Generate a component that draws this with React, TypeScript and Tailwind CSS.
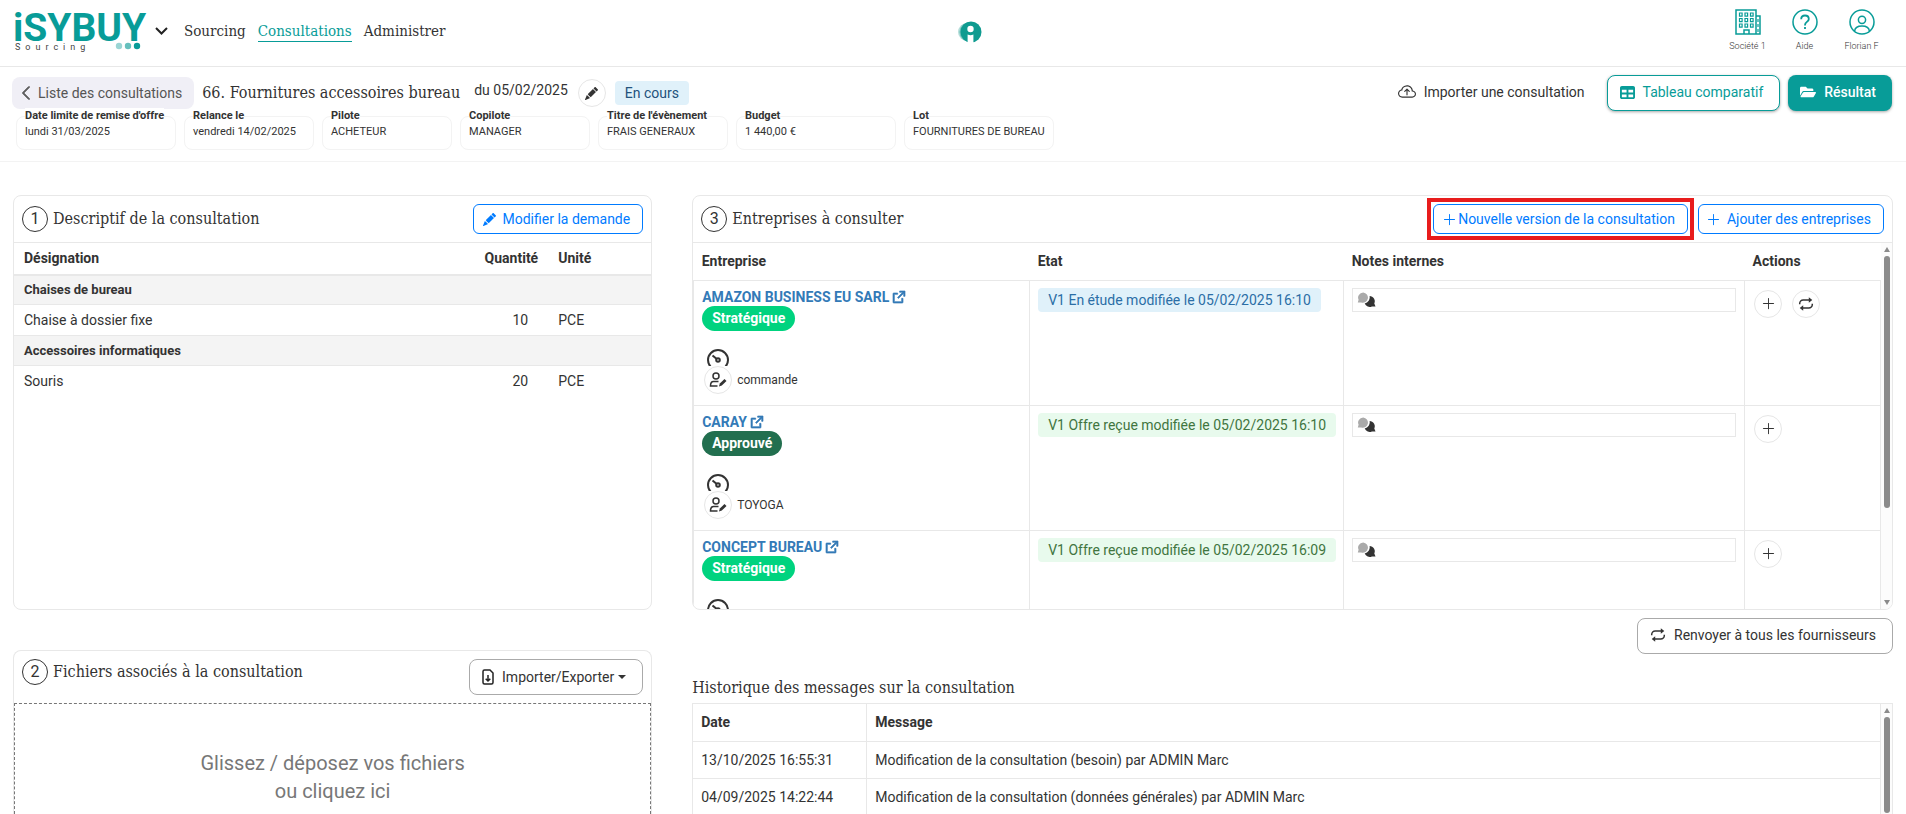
import type { ReactNode } from "react";
import { BsChevronLeft, BsCloudArrowUp, BsPencilFill, BsPlusLg } from "react-icons/bs";
import { FaFolderOpen } from "react-icons/fa";
import { FaTable } from "react-icons/fa6";
import { RiExternalLinkLine } from "react-icons/ri";
import clsx from "clsx";

interface Meta {
  label: string;
  value: string;
  className: string;
}

interface Company {
  name: string;
  tag: string;
  tagClass: string;
  contact?: string;
  state: string;
  stateClass: string;
  resend?: boolean;
}

const metas: Meta[] = [
  { label: "Date limite de remise d'offre", value: "lundi 31/03/2025", className: "min-w-[160px]" },
  { label: "Relance le", value: "vendredi 14/02/2025", className: "min-w-[130px]" },
  { label: "Pilote", value: "ACHETEUR", className: "min-w-[130px]" },
  { label: "Copilote", value: "MANAGER", className: "min-w-[130px]" },
  { label: "Titre de l'évènement", value: "FRAIS GENERAUX", className: "min-w-[130px]" },
  { label: "Budget", value: "1 440,00 €", className: "min-w-[160px]" },
  { label: "Lot", value: "FOURNITURES DE BUREAU", className: "min-w-[130px]" },
];

const groups = [
  { name: "Chaises de bureau", items: [{ name: "Chaise à dossier fixe", qty: 10, unit: "PCE" }] },
  { name: "Accessoires informatiques", items: [{ name: "Souris", qty: 20, unit: "PCE" }] },
];

const companies: Company[] = [
  {
    name: "AMAZON BUSINESS EU SARL",
    tag: "Stratégique",
    tagClass: "bg-[#00d37f]",
    contact: "commande",
    state: "V1 En étude modifiée le 05/02/2025 16:10",
    stateClass: "bg-[#e0f1fa] text-[#2b6ea6]",
    resend: true,
  },
  {
    name: "CARAY",
    tag: "Approuvé",
    tagClass: "bg-[#226f4f]",
    contact: "TOYOGA",
    state: "V1 Offre reçue modifiée le 05/02/2025 16:10",
    stateClass: "bg-[#e8faed] text-[#41753f]",
  },
  {
    name: "CONCEPT BUREAU",
    tag: "Stratégique",
    tagClass: "bg-[#00d37f]",
    state: "V1 Offre reçue modifiée le 05/02/2025 16:09",
    stateClass: "bg-[#e8faed] text-[#41753f]",
  },
];

const messages = [
  { date: "13/10/2025 16:55:31", text: "Modification de la consultation (besoin) par ADMIN Marc" },
  { date: "04/09/2025 14:22:44", text: "Modification de la consultation (données générales) par ADMIN Marc" },
];

const slab = "font-['Roboto_Slab','DejaVu_Serif_Condensed','DejaVu_Serif',serif]";

function Logo() {
  return (
    <svg width="136" height="44" viewBox="0 0 136 44" className="overflow-visible" role="img" aria-label="iSYBUY Sourcing">
      <text x="-1" y="32" fontFamily="Roboto" fontWeight="700" fontSize="39" fill="#089c98">
        iSYBUY
      </text>
      <text x="1" y="41" fontFamily="Roboto" fontSize="9" letterSpacing="5" fill="#444">
        Sourcing
      </text>
      <circle cx="105" cy="37" r="3.2" fill="#9bd5d4" />
      <circle cx="114" cy="37" r="3.2" fill="#66c0bd" />
      <circle cx="123" cy="37" r="3.2" fill="#089c98" />
    </svg>
  );
}

function BrandMark() {
  return (
    <svg width="26" height="22" viewBox="0 0 26 22" aria-hidden="true">
      <circle cx="11" cy="11" r="9" fill="#b5deda" />
      <circle cx="13" cy="11" r="9.6" fill="#6fbfb8" />
      <circle cx="15" cy="11" r="10.5" fill="#0f9b90" />
      <circle cx="14.5" cy="8" r="3.2" fill="#fff" />
      <path d="M11.6 13.4q3 1.600 5.800 0V22h-5.800z" fill="#fff" />
    </svg>
  );
}

function HelpIcon() {
  return (
    <svg width="26" height="26" viewBox="0 0 26 26" fill="none" stroke="currentColor" strokeWidth="1.5" aria-hidden="true">
      <circle cx="13" cy="13" r="12" />
      <path d="M9.200 10.200c0-2.300 1.600-3.700 3.800-3.700s3.800 1.400 3.800 3.400c0 3-3.800 3-3.800 6v.6M13 18v2" strokeWidth="1.8" />
    </svg>
  );
}

function UserIcon() {
  return (
    <svg width="26" height="26" viewBox="0 0 26 26" fill="none" stroke="currentColor" strokeWidth="1.5" aria-hidden="true">
      <circle cx="13" cy="13" r="12" />
      <circle cx="13" cy="10.8" r="3.6" />
      <path d="M5.600 22.200c.3-3.600 2.600-5.200 7.400-5.200s7.100 1.600 7.400 5.200" />
    </svg>
  );
}

function CompanyIcon() {
  return (
    <svg width="26" height="26" viewBox="0 0 26 26" fill="none" stroke="currentColor" strokeWidth="1.2" aria-hidden="true">
      <path d="M1 1h20v24H1zM21 7h4v18h-4M9 25v-4h5v4" strokeWidth="1.500" />
      {[4, 9.5, 15].map((y) => (
        <path key={y} d={`M4.500 ${y}h2.600v3.200H4.500zM10 ${y}h2.600v3.200H10zM15.500 ${y}h2.600v3.200h-2.600z`} />
      ))}
      <path d="M23 10v3M23 15v3M23 20v3" />
    </svg>
  );
}

function ChatIcon() {
  return (
    <svg width="19" height="15" viewBox="0 0 19 15" aria-hidden="true">
      <path d="M12.600 4A5.200 5.200 0 0 1 17.300 11.400l1.200 3h-3.600A5.400 5.400 0 0 1 7.700 11.600a6.500 6.500 0 0 0 4.900-7.600z" fill="#333" />
      <path d="M6.200.4a5.300 5.200 0 1 1-1.900 10.200H.8l.8-2.800A5.300 5.200 0 0 1 6.200.4z" fill="#aaa" />
    </svg>
  );
}

function GaugeIcon() {
  return (
    <svg width="24" height="24" viewBox="0 0 24 24" fill="none" stroke="#333" strokeWidth="2" aria-hidden="true">
      <circle cx="12" cy="12" r="10" />
      <circle cx="12" cy="12" r="1.8" />
      <path d="m6.500 7.500 4 3.300" />
    </svg>
  );
}

function RepeatIcon() {
  return (
    <svg width="16" height="16" viewBox="0 0 16 16" fill="none" stroke="#333" strokeWidth="1.500" aria-hidden="true">
      <path d="M1.700 8.300V7.500A3.500 3.500 0 0 1 5.200 4H12M14.300 7.700v.8a3.500 3.500 0 0 1-3.500 3.500H4" />
      <path d="M10.800 1.300 14.300 4l-3.500 2.700zM5.200 9.300 1.700 12l3.500 2.700z" fill="#333" stroke="none" />
    </svg>
  );
}

function ContactIcon() {
  return (
    <svg width="18" height="18" viewBox="0 0 18 18" fill="none" stroke="#333" strokeWidth="1.500" aria-hidden="true">
      <circle cx="7" cy="5" r="3" />
      <path d="M9.500 10.500H4.500q-3 0-3 4.500h7" />
      <path d="M10 15.500l.8-3 4.700-4.500 2 2-4.700 4.600z" fill="#333" stroke="none" />
    </svg>
  );
}

function FileIcon() {
  return (
    <svg width="12" height="16" viewBox="0 0 12 16" fill="none" stroke="#222" strokeWidth="1.500" aria-hidden="true">
      <path d="M1 2.500Q1 1 2.500 1H8l3 3v9.500q0 1.500-1.500 1.500h-7Q1 15 1 13.500zM6 6v6M3.700 9.700 6 12l2.300-2.300" />
    </svg>
  );
}

// Track with its two arrows, the thumb height is set by the caller
function Scrollbar({ thumb }: { thumb: string }) {
  return (
    <div className="flex w-[11px] shrink-0 flex-col items-center bg-[#fcfcfc] py-1">
      <div className="mb-1 h-0 w-0 border-x-[3px] border-b-[5px] border-x-transparent border-b-[#8b8b8b]" />
      <div className={clsx("w-[6px] rounded-full bg-[#8b8b8b]", thumb)} />
      <div className="mt-auto h-0 w-0 border-x-[3px] border-t-[5px] border-x-transparent border-t-[#8b8b8b]" />
    </div>
  );
}

function SectionTitle({ step, children }: { step: number; children: ReactNode }) {
  return (
    <h2 className={`flex items-center gap-[5px] text-[16px] font-medium ${slab}`}>
      <span className="flex size-[26px] items-center justify-center rounded-full border border-[#333] font-['Roboto',sans-serif] text-[16px] font-normal">
        {step}
      </span>
      {children}
    </h2>
  );
}

function BlueButton({ icon, children }: { icon: ReactNode; children: ReactNode }) {
  return (
    <button className="flex h-[30px] items-center gap-[7px] rounded-md border border-[#007bff] bg-white pr-3 pl-[9px] text-[#007bff]">
      {icon}
      {children}
    </button>
  );
}

function RoundButton({ label, children }: { label: string; children: ReactNode }) {
  return (
    <button aria-label={label} className="flex size-7 shrink-0 items-center justify-center rounded-full border border-[#e6e6e6] bg-white">
      {children}
    </button>
  );
}

function Header() {
  return (
    <header className="flex h-[67px] shrink-0 items-start justify-between border-b border-[#e8e8e8]">
      <div className="flex flex-1 items-center pt-[9px] pl-[14px]">
        <Logo />
        <button aria-label="Changer de module" className="ml-[5px]">
          <svg width="13" height="8" viewBox="0 0 13 8" fill="none" stroke="#222" strokeWidth="2" aria-hidden="true">
            <path d="m1 1 5.500 5.500L12 1" />
          </svg>
        </button>
        <nav className={`ml-4 flex gap-3 text-[15px] ${slab}`}>
          <a href="#sourcing">Sourcing</a>
          <a href="#consultations" className="border-b border-[#089c98] text-[#089c98]">Consultations</a>
          <a href="#administrer">Administrer</a>
        </nav>
      </div>
      <div className="pt-[21px] pl-[34px]">
        <BrandMark />
      </div>
      <div className="flex flex-1 justify-end pt-[9px] pr-4 text-[9px] leading-[14px] font-light">
        <a href="#societe" className="flex w-[57px] flex-col items-center gap-1">
          <span className="text-[#089c98]"><CompanyIcon /></span>
          Société 1
        </a>
        <a href="#aide" className="flex w-[57px] flex-col items-center gap-1">
          <span className="text-[#089c98]"><HelpIcon /></span>
          Aide
        </a>
        <a href="#profil" className="flex w-[57px] flex-col items-center gap-1">
          <span className="text-[#089c98]"><UserIcon /></span>
          Florian F
        </a>
      </div>
    </header>
  );
}

function SubHeader() {
  return (
    <section className="h-[95px] shrink-0 border-b border-[#f3f3f3] pt-2 pr-[14px] pl-3">
      <div className="flex items-start">
        <a href="#liste" className="mt-[2px] flex h-8 items-center gap-1 rounded-lg bg-[#f0eff6] pr-3 pl-[6px] text-[#555]">
          <BsChevronLeft className="size-4 stroke-1" />
          Liste des consultations
        </a>
        <h1 className={`ml-2 pt-[7px] text-[16px] leading-[22px] font-medium ${slab}`}>66. Fournitures accessoires bureau</h1>
        <span className="ml-[14px] pt-[5px]">du 05/02/2025</span>
        <div className="mt-1 ml-[10px] flex items-center gap-[9px]">
          <RoundButton label="Modifier le titre">
            <BsPencilFill className="size-[13px]" />
          </RoundButton>
          <span className="flex h-6 items-center rounded bg-[#e0f1fa] px-[10px] text-[#23527c]">En cours</span>
        </div>
        <div className="ml-auto flex gap-2">
          <button className="mr-[14px] flex h-[34px] items-center gap-2">
            <BsCloudArrowUp className="size-[18px]" />
            Importer une consultation
          </button>
          <button className="flex h-9 items-center gap-2 rounded-lg border border-[#089c98] bg-white pr-4 pb-[2px] pl-3 text-[#089c98] shadow-[0_1px_3px_rgba(0,0,0,0.35)]">
            <FaTable className="size-[15px]" />
            Tableau comparatif
          </button>
          <button className="flex h-9 items-center gap-2 rounded-lg bg-[#089c98] pr-4 pb-[2px] pl-3 font-medium text-white shadow-[0_1px_3px_rgba(0,0,0,0.35)]">
            <FaFolderOpen className="size-4" />
            Résultat
          </button>
        </div>
      </div>
      <dl className="ml-1 flex gap-2 text-[11px] leading-4">
        {metas.map((meta) => (
          <div key={meta.label} className={clsx("mt-[5px] h-[34px] rounded-lg border border-[#f3f3f3] px-2", meta.className)}>
            <dt className="-mt-[9px] w-fit bg-white font-bold">{meta.label}</dt>
            <dd>{meta.value}</dd>
          </div>
        ))}
      </dl>
    </section>
  );
}

function Description() {
  return (
    <section className="h-[415px] rounded-lg border border-[#e8e8e8]">
      <div className="flex h-[46px] items-center justify-between px-2">
        <SectionTitle step={1}>Descriptif de la consultation</SectionTitle>
        <BlueButton icon={<BsPencilFill className="size-[13px]" />}>Modifier la demande</BlueButton>
      </div>
      <table className="w-full border-t border-[#e8e8e8] text-left">
        <thead>
          <tr className="h-[32px] border-b-2 border-[#e8e8e8]">
            <th className="pl-[10px] font-bold">Désignation</th>
            <th className="w-[76px] pr-2 text-right font-bold">Quantité</th>
            <th className="w-[105px] pl-3 font-bold">Unité</th>
          </tr>
        </thead>
        {groups.map((group) => (
          <tbody key={group.name}>
            <tr className="h-[30px] border-t border-[#e8e8e8] bg-[#f4f4f4] text-[13px]">
              <th colSpan={3} className="pl-[10px] font-bold">{group.name}</th>
            </tr>
            {group.items.map((item) => (
              <tr key={item.name} className="h-[31px] border-t border-[#e8e8e8]">
                <td className="pl-[10px]">{item.name}</td>
                <td className="pr-[18px] text-right">{item.qty}</td>
                <td className="pl-3">{item.unit}</td>
              </tr>
            ))}
          </tbody>
        ))}
      </table>
    </section>
  );
}

function Files() {
  return (
    <section className="mt-10 flex flex-1 flex-col rounded-t-lg border border-b-0 border-[#e8e8e8]">
      <div className="flex h-[52px] shrink-0 items-start justify-between px-2 pt-2">
        <SectionTitle step={2}>Fichiers associés à la consultation</SectionTitle>
        <button className="flex h-9 items-center gap-2 rounded-lg border border-[#aaa] bg-white pr-4 pl-3">
          <FileIcon />
          <span className="flex items-center gap-1">
            Importer/Exporter
            <span className="h-0 w-0 border-x-4 border-t-4 border-x-transparent border-t-[#333]" />
          </span>
        </button>
      </div>
      <button className="flex flex-1 flex-col items-center border border-b-0 border-dashed border-[#777] pt-[45px] text-[20px] leading-7 text-[#777]">
        <span>Glissez / déposez vos fichiers</span>
        <span>ou cliquez ici</span>
      </button>
    </section>
  );
}

function Companies() {
  return (
    <section className="flex h-[415px] shrink-0 flex-col overflow-hidden rounded-lg border border-[#e8e8e8]">
      <div className="flex h-[47px] shrink-0 items-center justify-between border-b border-[#e8e8e8] px-2">
        <SectionTitle step={3}>Entreprises à consulter</SectionTitle>
        <div className="flex items-center gap-1">
          <div className="border-4 border-[#e81c1c] p-[2px]">
            <BlueButton icon={<BsPlusLg className="-mr-[6px] -ml-px size-[15px]" />}>Nouvelle version de la consultation</BlueButton>
          </div>
          <BlueButton icon={<BsPlusLg className="-mr-px -ml-[2px] size-[15px]" />}>Ajouter des entreprises</BlueButton>
        </div>
      </div>
      <div className="flex min-h-0 flex-1">
        <div className="min-w-0 flex-1 overflow-hidden">
          <table className="w-full table-fixed text-left">
            <thead>
              <tr className="h-[37px]">
                <th className="w-[336px] pl-2 font-bold">Entreprise</th>
                <th className="w-[314px] pl-2 font-bold">Etat</th>
                <th className="pl-2 font-bold">Notes internes</th>
                <th className="w-[136px] pl-2 font-bold">Actions</th>
              </tr>
            </thead>
            <tbody>
              {companies.map((company) => (
                <tr key={company.name} className="h-[125px] align-top">
                  <td className="border border-[#e8e8e8] px-2 pt-[7px]">
                    <a href="#entreprise" className="flex items-center gap-[2px] leading-[18px] font-bold text-[#337ab7]">
                      {company.name}
                      <RiExternalLinkLine className="size-4 stroke-1" />
                    </a>
                    <span className={clsx("inline-flex h-[25px] items-center rounded-full px-[10px] font-bold text-white", company.tagClass)}>
                      {company.tag}
                    </span>
                    <div className="mt-[17px] ml-1 h-[18px] overflow-hidden">
                      <GaugeIcon />
                    </div>
                    {company.contact && (
                      <div className="ml-[2px] flex items-center gap-[5px] text-[12px]">
                        <RoundButton label="Modifier le contact">
                          <ContactIcon />
                        </RoundButton>
                        {company.contact}
                      </div>
                    )}
                  </td>
                  <td className="border border-[#e8e8e8] px-2 pt-[7px]">
                    <span className={clsx("inline-flex h-6 items-center rounded px-[10px] whitespace-nowrap", company.stateClass)}>
                      {company.state}
                    </span>
                  </td>
                  <td className="border border-[#e8e8e8] px-2 pt-[7px]">
                    <button aria-label="Notes internes" className="flex h-6 w-full items-center border border-[#e8e8e8] px-1">
                      <ChatIcon />
                    </button>
                  </td>
                  <td className="border border-[#e8e8e8] px-[9px] pt-[9px]">
                    <div className="flex gap-[10px]">
                      <RoundButton label="Ajouter">
                        <BsPlusLg className="size-[15px]" />
                      </RoundButton>
                      {company.resend && (
                        <RoundButton label="Renvoyer">
                          <RepeatIcon />
                        </RoundButton>
                      )}
                    </div>
                  </td>
                </tr>
              ))}
            </tbody>
          </table>
        </div>
        <Scrollbar thumb="h-[252px]" />
      </div>
    </section>
  );
}

function History() {
  return (
    <section className="mt-[22px] flex min-h-0 flex-1 flex-col">
      <h2 className={`pb-[3px] text-[16px] leading-6 font-medium ${slab}`}>Historique des messages sur la consultation</h2>
      <div className="flex min-h-0 flex-1 border-t border-r border-[#e8e8e8]">
        <table className="w-full self-start text-left">
          <thead>
            <tr className="h-[37px]">
              <th className="w-[174px] border border-t-0 border-[#e8e8e8] pl-2 font-bold">Date</th>
              <th className="border border-t-0 border-[#e8e8e8] pl-2 font-bold">Message</th>
            </tr>
          </thead>
          <tbody>
            {messages.map((message) => (
              <tr key={message.date} className="h-[37px]">
                <td className="border border-[#e8e8e8] pl-2">{message.date}</td>
                <td className="border border-[#e8e8e8] pl-2">{message.text}</td>
              </tr>
            ))}
          </tbody>
        </table>
        <Scrollbar thumb="flex-1 -mb-2" />
      </div>
    </section>
  );
}

export default function App() {
  return (
    <div className="flex h-screen flex-col overflow-hidden bg-white font-['Roboto',sans-serif] text-[14px] leading-5 text-[#333]">
      <Header />
      <SubHeader />
      <main className="flex min-h-0 flex-1 gap-10 px-[13px] pt-[33px]">
        <div className="flex w-[34%] shrink-0 flex-col">
          <Description />
          <Files />
        </div>
        <div className="flex min-w-0 flex-1 flex-col">
          <Companies />
          <button className="mt-2 flex h-9 shrink-0 items-center gap-2 self-end rounded-lg border border-[#aaa] bg-white pr-4 pb-[2px] pl-3">
            <RepeatIcon />
            Renvoyer à tous les fournisseurs
          </button>
          <History />
        </div>
      </main>
    </div>
  );
}
